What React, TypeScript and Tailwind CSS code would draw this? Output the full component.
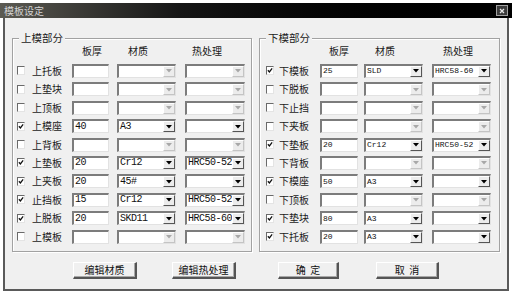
import React from "react";

type Row = { label: string; on: boolean; t?: string; m?: string; h?: string };

const upper: Row[] = [
  { label: "上托板", on: false },
  { label: "上垫块", on: false },
  { label: "上顶板", on: false },
  { label: "上模座", on: true, t: "40", m: "A3", h: "" },
  { label: "上背板", on: false },
  { label: "上垫板", on: true, t: "20", m: "Cr12", h: "HRC50-52" },
  { label: "上夹板", on: true, t: "20", m: "45#", h: "" },
  { label: "止挡板", on: true, t: "15", m: "Cr12", h: "HRC50-52" },
  { label: "上脱板", on: true, t: "20", m: "SKD11", h: "HRC58-60" },
  { label: "上模板", on: false },
];

const lower: Row[] = [
  { label: "下模板", on: true, t: "25", m: "SLD", h: "HRC58-60" },
  { label: "下脱板", on: false },
  { label: "下止挡", on: false },
  { label: "下夹板", on: false },
  { label: "下垫板", on: true, t: "20", m: "Cr12", h: "HRC50-52" },
  { label: "下背板", on: false },
  { label: "下模座", on: true, t: "50", m: "A3", h: "" },
  { label: "下顶板", on: false },
  { label: "下垫块", on: true, t: "80", m: "A3", h: "" },
  { label: "下托板", on: true, t: "20", m: "A3", h: "" },
];

const cjk = { fontFamily: '"Noto Sans CJK SC", "Liberation Sans", sans-serif' };
const mono = { fontFamily: '"Liberation Mono", "Noto Sans CJK SC", monospace' };

function CheckBox({ on }: { on: boolean }) {
  return (
    <div className="w-[8px] h-[9px] bg-white border-t border-l border-t-[#6a6a6a] border-l-[#6a6a6a] border-r border-b border-r-[#e4e4e4] border-b-[#e4e4e4] flex items-center justify-center">
      {on && (
        <svg width="7" height="7" viewBox="0 0 7 7">
          <path d="M1 3.2 L2.8 5.2 L6 1" fill="none" stroke="#111" strokeWidth="1.5" />
        </svg>
      )}
    </div>
  );
}

function Field({ value, w, small }: { value?: string; w: string; small: boolean }) {
  return (
    <div
      className={`${w} h-[14px] bg-white border-t-2 border-l-2 border-t-[#7c7c7c] border-l-[#7c7c7c] border-r border-b border-r-[#e2e2e2] border-b-[#e2e2e2] pl-[1px] flex items-center text-[#111] leading-none ${small ? "text-[8px]" : "text-[10px] tracking-[-0.5px]"}`}
      style={mono}
    >
      {value}
    </div>
  );
}

function Combo({ value, enabled, w, small }: { value?: string; enabled: boolean; w: string; small: boolean }) {
  return (
    <div className={`${w} h-[14px] bg-white border-t-2 border-l-2 border-t-[#7c7c7c] border-l-[#7c7c7c] border-r border-b border-r-[#e2e2e2] border-b-[#e2e2e2] flex`}>
      <div
        className={`flex-1 pl-[1px] flex items-center text-[#111] leading-none overflow-hidden ${small ? "text-[8px]" : "text-[10px] tracking-[-0.5px]"}`}
        style={mono}
      >
        {value}
      </div>
      <div
        className={`w-[12px] h-full flex items-center justify-center bg-[#ececec] border-t border-l border-t-white border-l-white border-r border-b ${enabled ? "border-r-[#555] border-b-[#555]" : "border-r-[#c4c4c4] border-b-[#c4c4c4]"}`}
      >
        <svg width="6" height="4" viewBox="0 0 6 4">
          <polygon points="0,0 6,0 3,3.5" fill={enabled ? "#000" : "#a8a8a8"} />
        </svg>
      </div>
    </div>
  );
}

function Group({ title, rows, right }: { title: string; rows: Row[]; right: boolean }) {
  return (
    <div
      className={`relative ${right ? "w-[241px]" : "w-[240px]"} h-[214px] border border-[#a2a2a2] shadow-[inset_1px_1px_0_#fff,1px_1px_0_#fff] flex flex-col`}
    >
      <span className="absolute -top-[8px] left-[6px] px-[2px] bg-[#f0f0f0] text-[10.5px] leading-[14px] text-[#1a1a1a]" style={cjk}>
        {title}
      </span>
      <div className="h-[22.8px] flex items-center text-[10px] text-[#1a1a1a]" style={cjk}>
        <span className="ml-[69px] w-[20px] text-center">板厚</span>
        <span className="ml-[26px] w-[20px] text-center">材质</span>
        <span className={`${right ? "ml-[48px]" : "ml-[44px]"} w-[30px] text-center`}>热处理</span>
      </div>
      {rows.map((r) => (
        <div key={r.label} className="h-[18.4px] flex items-center">
          <div className={right ? "ml-[6px]" : "ml-[4px]"}>
            <CheckBox on={r.on} />
          </div>
          <span
            className={`${right ? "ml-[5px] w-[41px]" : "ml-[7px] w-[40px]"} text-[10px] leading-none text-[#1a1a1a]`}
            style={cjk}
          >
            {r.label}
          </span>
          <Field value={r.t} w={right ? "w-[38px]" : "w-[37px]"} small={right} />
          <div className={right ? "ml-[6px]" : "ml-[8px]"}>
            <Combo value={r.m} enabled={r.on} w="w-[59px]" small={right} />
          </div>
          <div className="ml-[9px]">
            <Combo value={r.h} enabled={r.on} w={right ? "w-[59px]" : "w-[60px]"} small={right} />
          </div>
        </div>
      ))}
    </div>
  );
}

function Btn({ label, cls }: { label: string; cls: string }) {
  return (
    <div
      className={`${cls} h-[17px] flex items-center justify-center bg-[#f0f0f0] border-t border-l border-t-white border-l-white border-r-2 border-b-2 border-r-[#555] border-b-[#555] shadow-[inset_-1px_-1px_0_#a8a8a8] text-[10px] leading-none text-[#111] whitespace-pre`}
      style={cjk}
    >
      {label}
    </div>
  );
}

export default function App() {
  return (
    <div className="w-[512px] h-[296px] bg-white overflow-hidden pt-[3px]" style={cjk}>
      {/* Title bar */}
      <div className="h-[15px] flex items-center justify-between bg-linear-to-r from-[#5c5b53] via-[#161616] via-35% to-black">
        <span className="ml-[4px] text-[10px] leading-none text-[#d4d4d4]" style={cjk}>
          模板设定
        </span>
        <div className="mr-[4px] w-[12px] h-[11px] border border-[#a0a0a0] bg-[#3a3a3a] flex items-center justify-center">
          <svg width="6" height="6" viewBox="0 0 6 6">
            <path d="M1 1 L5 5 M5 1 L1 5" stroke="#e6e6e6" strokeWidth="1.3" />
          </svg>
        </div>
      </div>

      {/* Body */}
      <div className="ml-[3px] w-[506px] h-[273px] bg-[#f0f0f0] border-l-2 border-r-2 border-b-2 border-[#5a5a5a] pt-[20px]">
        <div className="flex ml-[7px] gap-[7px]">
          <Group title="上模部分" rows={upper} right={false} />
          <Group title="下模部分" rows={lower} right={true} />
        </div>
        <div className="flex mt-[10px]">
          <Btn label="编辑材质" cls="ml-[68px] w-[64px]" />
          <Btn label="编辑热处理" cls="ml-[35px] w-[64px]" />
          <Btn label="确  定" cls="ml-[42px] w-[61px]" />
          <Btn label="取  消" cls="ml-[37px] w-[63px]" />
        </div>
      </div>
    </div>
  );
}
